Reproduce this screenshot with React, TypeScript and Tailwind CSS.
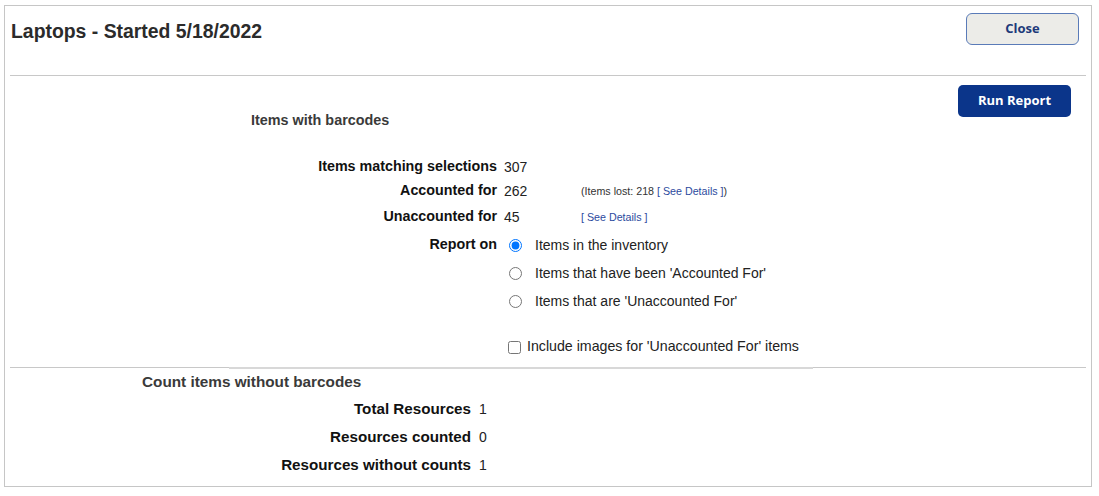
import React, { useState } from 'react';

const font = { fontFamily: '"Liberation Sans", Arial, sans-serif' };

function Row({
  label,
  children,
  h = 'h-6',
  size = 'text-[14.3px]',
}: {
  label: string;
  children?: React.ReactNode;
  h?: string;
  size?: string;
}) {
  return (
    <>
      <div className={`${h} ${size} flex items-center justify-end font-bold text-[#111]`}>{label}</div>
      <div className={`${h} flex items-center text-[14px] text-[#222]`}>{children}</div>
    </>
  );
}

export default function App() {
  const [reportOn, setReportOn] = useState('inventory');
  const [includeImages, setIncludeImages] = useState(false);

  const options = [
    { id: 'inventory', label: 'Items in the inventory' },
    { id: 'accounted', label: "Items that have been 'Accounted For'" },
    { id: 'unaccounted', label: "Items that are 'Unaccounted For'" },
  ];

  return (
    <div className="w-[1099px] h-[496px] bg-white pt-[5px] pl-[4px]" style={font}>
      <div className="w-[1088px] h-[482px] border border-[#c6c6c6] flex flex-col">
        {/* header */}
        <div className="h-[69px] flex items-start justify-between">
          <h1 className="ml-[6px] mt-[11px] text-[19.4px] leading-[28px] font-bold text-[#2b2b2b]">
            Laptops - Started 5/18/2022
          </h1>
          <button
            className="mt-[7px] mr-[12px] w-[113px] h-[32px] rounded-[6px] border border-[#5a7bb8] bg-[#ecece8] text-[13px] font-bold text-[#1d3a7a]"
            style={{ fontFamily: '"Open Sans", sans-serif' }}
          >
            Close
          </button>
        </div>
        <div className="mx-[5px] h-px bg-[#c8c8c8]" />

        {/* items with barcodes */}
        <div className="flex">
          <div className="flex-1 flex flex-col">
            <div className="pl-[246px] pt-[34px] h-[54px] text-[14.4px] leading-[20px] font-bold text-[#3a3a3a]">
              Items with barcodes
            </div>
            <div className="mt-[25px] grid grid-cols-[492px_auto] gap-x-[7px]">
              <Row label="Items matching selections">307</Row>
              <Row label="Accounted for">
                <span className="w-[77px]">262</span>
                <span className="text-[10.7px] text-[#333]">
                  (Items lost: 218 <span className="text-[#2c4a9e]">[ See Details ]</span>)
                </span>
              </Row>
              <Row label="Unaccounted for" h="h-7">
                <span className="w-[77px]">45</span>
                <span className="text-[10.7px] text-[#2c4a9e]">[ See Details ]</span>
              </Row>
              <div className="h-7 flex items-center justify-end text-[14.3px] font-bold text-[#111]">Report on</div>
              <div className="flex flex-col">
                {options.map((o) => (
                  <label key={o.id} className="h-7 flex items-center text-[14px] text-[#222]">
                    <input
                      type="radio"
                      name="reportOn"
                      checked={reportOn === o.id}
                      onChange={() => setReportOn(o.id)}
                      className="ml-[5px] mr-[13px] w-[13px] h-[13px]"
                    />
                    {o.label}
                  </label>
                ))}
                <label className="mt-[20px] h-6 flex items-center text-[14.2px] text-[#222]">
                  <input
                    type="checkbox"
                    checked={includeImages}
                    onChange={(e) => setIncludeImages(e.target.checked)}
                    className="ml-[4px] mr-[6px] w-[13px] h-[13px]"
                  />
                  Include images for 'Unaccounted For' items
                </label>
              </div>
            </div>
          </div>
          <div>
            <button
              className="mt-[9px] mr-[20px] w-[113px] h-[32px] rounded-[5px] bg-[#0b358a] text-[13px] font-bold text-white"
              style={{ fontFamily: '"Open Sans", sans-serif' }}
            >
              Run Report
            </button>
          </div>
        </div>

        {/* separator */}
        <div className="mt-[8px] mx-[5px] flex items-start">
          <div className="w-[219px] h-px bg-[#c8c8c8]" />
          <div className="w-[584px] h-[2px] bg-[#d8d8d8]" />
          <div className="flex-1 h-px bg-[#c8c8c8]" />
        </div>

        {/* without barcodes */}
        <div className="pl-[137px] pt-[3px] h-[23px] text-[15.3px] leading-[20px] font-bold text-[#3a3a3a]">
          Count items without barcodes
        </div>
        <div className="mt-[3px] grid grid-cols-[466px_auto] gap-x-[8px]">
          <Row label="Total Resources" h="h-7" size="text-[15.2px]">1</Row>
          <Row label="Resources counted" h="h-7" size="text-[15.2px]">0</Row>
          <Row label="Resources without counts" h="h-7" size="text-[15.2px]">1</Row>
        </div>
      </div>
    </div>
  );
}
